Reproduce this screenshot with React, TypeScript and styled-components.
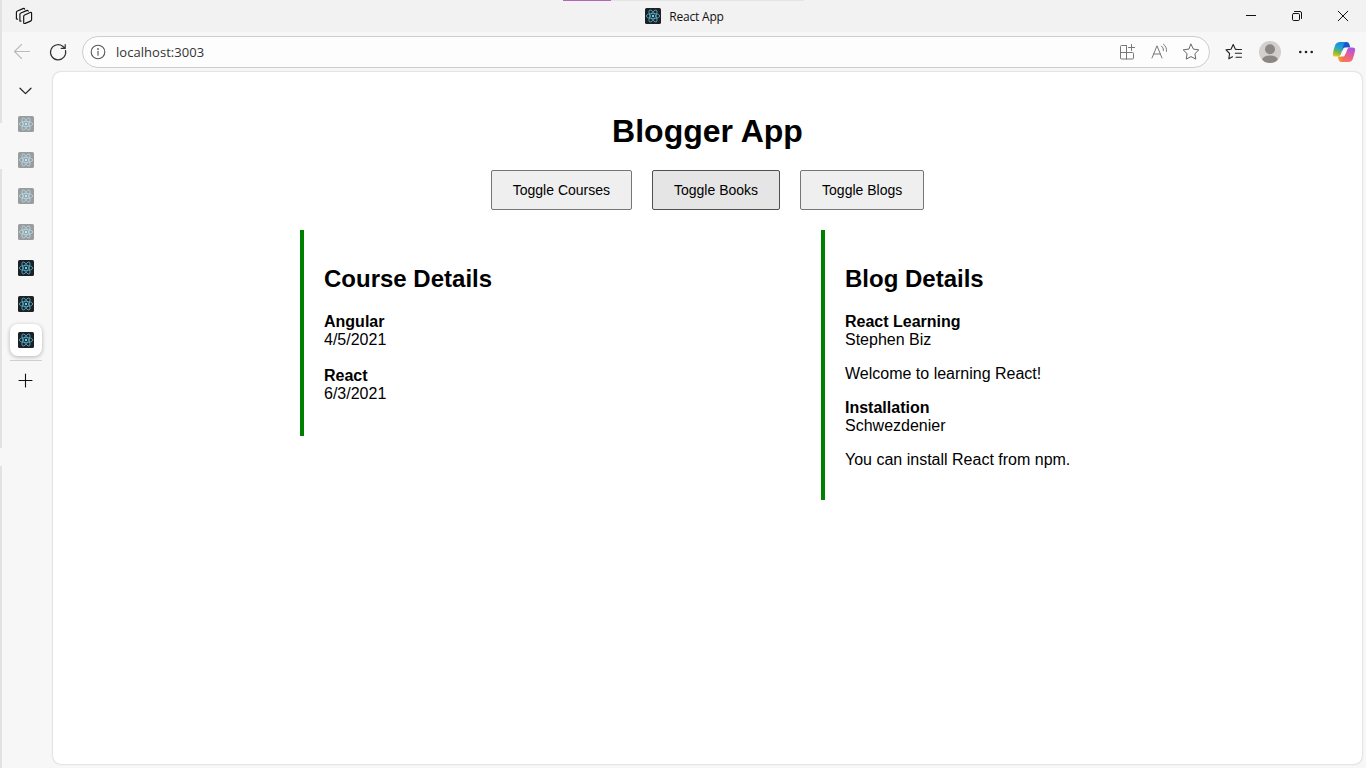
import React from 'react';
import styled, { createGlobalStyle } from 'styled-components';

const GlobalStyle = createGlobalStyle`
  * { box-sizing: border-box; }
  body { margin: 0; overflow: hidden; background: #f7f7f7; }
  svg { display: block; flex: none; }
`;

const Shell = styled.div`
  display: flex;
  height: 768px;
  background: #f7f7f7;
  font-family: "Open Sans", "Noto Sans", sans-serif;
`;

const EdgeStrip = styled.div`
  width: 2px;
  flex: none;
  background: linear-gradient(
    #e2e2e2 123px, #f7f7f7 123px, #f7f7f7 169px, #e2e2e2 169px,
    #e2e2e2 448px, #f7f7f7 448px, #f7f7f7 466px, #e2e2e2 466px
  );
`;

const Window = styled.div`
  flex: 1;
  min-width: 0;
  display: flex;
  flex-direction: column;
`;

const TitleBar = styled.header`
  position: relative;
  height: 32px;
  flex: none;
  display: grid;
  grid-template-columns: 1fr auto 1fr;
  align-items: center;
  background: #f2f2f2;
  padding: 0 13px 0 12px;
`;

const LoadingBar = styled.div`
  position: absolute;
  top: 0;
  left: 561px;
  width: 241px;
  height: 1px;
  background: linear-gradient(90deg, #b565b8 48px, #e4e4e4 48px);
`;

const TabTitle = styled.div`
  display: flex;
  align-items: center;
  gap: 8px;
  margin-left: 2px;
  font-size: 12px;
  letter-spacing: -0.2px;
  color: #111;
  white-space: nowrap;
`;

const TabLabel = styled.span`
  padding-top: 2px;
  line-height: 16px;
`;

const WindowControls = styled.div`
  display: flex;
  justify-content: flex-end;
  gap: 26px;
`;

const Toolbar = styled.div`
  height: 39px;
  flex: none;
  display: flex;
  align-items: center;
  padding: 1px 9px 0 10px;
`;

const NavButtons = styled.div`
  display: flex;
  gap: 16px;
  width: 70px;
`;

const AddressBar = styled.div`
  width: 1128px;
  height: 32px;
  display: flex;
  align-items: center;
  border: 1px solid #cccdce;
  border-radius: 16px;
  background: #fdfdfd;
  padding: 0 8px 0 5px;
`;

const Address = styled.span`
  flex: 1;
  margin-left: 8px;
  font-size: 13px;
  line-height: 18px;
  letter-spacing: 0.04px;
  color: #333;
`;

const AddressActions = styled.div`
  display: flex;
  gap: 12px;
`;

const ToolbarActions = styled.div`
  display: flex;
  align-items: center;
  margin-left: 14px;
  gap: 15px;
  svg:last-child { margin-left: 1px; }
`;

const Body = styled.div`
  flex: 1;
  min-height: 0;
  display: flex;
`;

const TabRail = styled.nav`
  width: 51px;
  flex: none;
  display: flex;
  flex-direction: column;
  align-items: center;
  padding: 10px 3px 0 0;
`;

const TabList = styled.div`
  display: flex;
  flex-direction: column;
  gap: 4px;
  margin-top: 7px;
`;

const TabButton = styled.div<{ $active?: boolean; $asleep?: boolean }>`
  width: 32px;
  height: 32px;
  display: grid;
  place-items: center;
  border-radius: 8px;
  background: ${p => (p.$active ? '#fff' : 'transparent')};
  box-shadow: ${p => (p.$active ? '0 1px 4px rgba(0,0,0,.28)' : 'none')};
  svg { opacity: ${p => (p.$asleep ? 0.42 : 1)}; }
`;

const RailDivider = styled.div`
  width: 32px;
  height: 1px;
  margin: 4px 0 10px;
  background: #cfcfcf;
`;

const Page = styled.main`
  flex: 1;
  margin: 1px 4px 4px 0;
  border-radius: 8px;
  background: #fff;
  box-shadow: 0 0 2px rgba(0,0,0,.28);
  font-family: "Liberation Sans", Arial, sans-serif;
  color: #000;
  padding-top: 41px;
`;

const PageTitle = styled.h1`
  margin: 0;
  font-size: 32px;
  line-height: 37px;
  text-align: center;
`;

const ButtonRow = styled.div`
  display: flex;
  justify-content: center;
  gap: 20px;
  margin-top: 20px;
`;

const ToggleButton = styled.button<{ $hover?: boolean }>`
  height: 40px;
  padding: 0 21px;
  border: 1px solid ${p => (p.$hover ? '#4f4f4f' : '#767676')};
  border-radius: 2px;
  background: ${p => (p.$hover ? '#e5e5e5' : '#efefef')};
  font: 14px/16px "Liberation Sans", Arial, sans-serif;
  color: #000;
`;

const Columns = styled.div`
  display: flex;
  align-items: flex-start;
  margin: 20px 0 0 247px;
`;

const Column = styled.section`
  width: 521px;
  border-left: 4px solid green;
  padding: 35px 20px 15px;
  font-size: 16px;
  line-height: 18px;
`;

const ColumnTitle = styled.h2`
  margin: 0 0 21px;
  font-size: 24px;
  line-height: 27px;
`;

const Course = styled.div`
  margin-bottom: 18px;
`;

const Blog = styled.div`
  margin-bottom: 16px;
`;

const EntryName = styled.div`
  font-weight: bold;
`;

const BlogText = styled.p`
  margin: 16px 0 0;
`;

const ReactTile = () => (
  <svg width="16" height="16" viewBox="0 0 16 16">
    <rect width="16" height="16" rx="1.6" fill="#1d2126" />
    <g fill="none" stroke="#58b0c9" strokeWidth=".8">
      <ellipse cx="8" cy="8" rx="6.7" ry="2.6" />
      <ellipse cx="8" cy="8" rx="6.7" ry="2.6" transform="rotate(60 8 8)" />
      <ellipse cx="8" cy="8" rx="6.7" ry="2.6" transform="rotate(120 8 8)" />
    </g>
    <circle cx="8" cy="8" r="1.2" fill="#61dafb" />
  </svg>
);

type IconProps = { size?: number; color?: string; width?: number; children: React.ReactNode };
const Icon = ({ size = 20, color = '#333', width = 1.1, children }: IconProps) => (
  <svg width={size} height={size} viewBox={`0 0 ${size} ${size}`} fill="none" stroke={color}
    strokeWidth={width} strokeLinecap="round" strokeLinejoin="round">{children}</svg>
);

const WorkspacesIcon = () => (
  <Icon color="#111" width={1.15}>
    <path d="M10.6 9 16.2 6.5q1.4-.5 1.4.9v6.2q0 1.1-1 1.5l-5.4 2.3q-1.5.5-1.5-1v-5.9q0-1.1.9-1.5z" />
    <path d="M7.2 15 5.9 15.2V8.5q0-1.1 1-1.5l5.6-2.4q1.3-.5 1.7.5" />
    <path d="M3.7 13.2 2.4 12.9V6.5q0-1.1 1-1.5L9 2.6q1.3-.5 1.7.5" />
  </Icon>
);

const Profile = () => (
  <svg width="22" height="22" viewBox="0 0 22 22">
    <defs><clipPath id="avatar"><circle cx="11" cy="11" r="11" /></clipPath></defs>
    <g clipPath="url(#avatar)">
      <rect width="22" height="22" fill="#d2cfcc" />
      <circle cx="11" cy="8.2" r="5" fill="#8a8785" />
      <ellipse cx="11" cy="19.4" rx="8" ry="5" fill="#8a8785" />
    </g>
  </svg>
);

const Copilot = () => (
  <svg width="24" height="24" viewBox="0 0 24 24">
    <defs>
      <linearGradient id="cpLeft" x1=".6" y1="0" x2=".3" y2="1">
        <stop offset="0" stopColor="#1a86e0" /><stop offset=".4" stopColor="#20a5d0" />
        <stop offset=".7" stopColor="#70b84c" /><stop offset="1" stopColor="#f1c516" />
      </linearGradient>
      <linearGradient id="cpRight" x1=".6" y1="0" x2=".3" y2="1">
        <stop offset="0" stopColor="#a855e5" /><stop offset=".5" stopColor="#e55c9c" />
        <stop offset="1" stopColor="#f77a50" />
      </linearGradient>
      <linearGradient id="cpBottom"><stop stopColor="#f2a52f" /><stop offset="1" stopColor="#ef5368" /></linearGradient>
    </defs>
    <path d="M10 2h4.6q2 0 2.6 1.8L18.3 7.4h-2.6q-2 0-2.7 2L12 12 9 9z" fill="#1f55cc" />
    <path d="M14 22H9.4q-2 0-2.6-1.8L5.7 16.6h2.6q2 0 2.7-2L12 12l3 3z" fill="url(#cpBottom)" />
    <path d="M7.8 2H14q-1.6.5-2.2 2.5L9.2 13.6q-.9 3-3.7 3H3.6Q.3 16.6.9 13.4q.8-4.3 2.5-8.8Q4.6 2 7.8 2z" fill="url(#cpLeft)" />
    <path d="M16.2 22H10q1.6-.5 2.2-2.5l2.6-9.1q.9-3 3.7-3h1.9q3.3 0 2.7 3.2-.8 4.3-2.5 8.8-1.2 2.6-4.4 2.6z" fill="url(#cpRight)" />
    <path d="M11 9q.5-1.6 2-1.6h3q-1 .5-1.4 2l-1.6 5.6q-.5 1.6-2 1.6H8q1-.5 1.4-2z" fill="#f7f7f7" />
  </svg>
);

const STAR = 'M10 2.2 12.4 7.1 17.8 7.9 13.9 11.7 14.8 17.1 10 14.6 5.2 17.1 6.1 11.7 2.2 7.9 7.6 7.1z';

const tabs = [
  { asleep: true }, { asleep: true }, { asleep: true }, { asleep: true },
  {}, {}, { active: true },
] as { asleep?: boolean; active?: boolean }[];

const courses = [
  { name: 'Angular', date: '4/5/2021' },
  { name: 'React', date: '6/3/2021' },
];

const blogs = [
  { title: 'React Learning', author: 'Stephen Biz', text: 'Welcome to learning React!' },
  { title: 'Installation', author: 'Schwezdenier', text: 'You can install React from npm.' },
];

export default function App() {
  return (
    <>
      <GlobalStyle />
      <Shell>
        <EdgeStrip />
        <Window>
          <TitleBar>
            <LoadingBar />
            <WorkspacesIcon />
            <TabTitle><ReactTile /><TabLabel>React App</TabLabel></TabTitle>
            <WindowControls>
              <Icon color="#111" width={1}><path d="M5 9.5h10" strokeLinecap="butt" /></Icon>
              <Icon color="#111" width={1}>
                <rect x="5.5" y="7.5" width="7" height="7" rx="1.2" />
                <path d="M7.5 5.5H13q1.5 0 1.5 1.5v5.5" />
              </Icon>
              <Icon color="#111" width={1}><path d="M5.2 5.2l9.6 9.6M14.8 5.2l-9.6 9.6" /></Icon>
            </WindowControls>
          </TitleBar>

          <Toolbar>
            <NavButtons>
              <Icon color="#bbb"><path d="M17.5 9.5H2.5M9.5 2.5l-7 7 7 7" /></Icon>
              <Icon color="#333" width={1.2}>
                <path d="M17.5 8.5A7.6 7.6 0 1 1 14.7 4.2L17 6.2M17.2 2.6v3.8h-4" />
              </Icon>
            </NavButtons>
            <AddressBar>
              <Icon color="#555" width={1.1}>
                <circle cx="10" cy="10" r="6.8" />
                <path d="M10 9.4v3.8" /><circle cx="10" cy="7" r=".35" />
              </Icon>
              <Address>localhost:3003</Address>
              <AddressActions>
                <Icon color="#777" width={1}>
                  <path d="M9.5 3.5h-5q-1 0-1 1v11.5q0 1 1 1h11q1 0 1-1v-4.5q0-1-1-1H3.5M9.5 3.5V17M14.5 2.5v6M11.5 5.5h6" />
                </Icon>
                <Icon color="#777" width={1}>
                  <path d="M3 16 8 3.8 13 16M4.7 12h6.6M12.5 4q2.2 1.5 2 4.5M14.5 2.3q3.5 2.5 3 7" />
                </Icon>
                <Icon color="#666" width={1}><path d={STAR} /></Icon>
              </AddressActions>
            </AddressBar>
            <ToolbarActions>
              <Icon color="#222" width={1.1}>
                <path d="M12.3 7.4 11.4 7.2 9.2 2.6 7 7.2 2 7.9 5.6 11.5 4.8 16.8 8.5 14.8M12 7.5h5.5M11.3 11.3h6.2M12 15.2h5.5" />
              </Icon>
              <Profile />
              <Icon color="#222">
                <g fill="#222" stroke="none">
                  <circle cx="4.3" cy="10" r="1.3" /><circle cx="10" cy="10" r="1.3" /><circle cx="15.7" cy="10" r="1.3" />
                </g>
              </Icon>
              <Copilot />
            </ToolbarActions>
          </Toolbar>

          <Body>
            <TabRail>
              <Icon color="#222" width={1.2}><path d="M4 7.2 9.5 12.6 15 7.2" /></Icon>
              <TabList>
                {tabs.map((tab, i) => (
                  <TabButton key={i} $active={tab.active} $asleep={tab.asleep}><ReactTile /></TabButton>
                ))}
              </TabList>
              <RailDivider />
              <Icon color="#111" width={1.1}><path d="M9.5 3v13M3 9.5h13" /></Icon>
            </TabRail>

            <Page>
              <PageTitle>Blogger App</PageTitle>
              <ButtonRow>
                <ToggleButton>Toggle Courses</ToggleButton>
                <ToggleButton $hover>Toggle Books</ToggleButton>
                <ToggleButton>Toggle Blogs</ToggleButton>
              </ButtonRow>
              <Columns>
                <Column>
                  <ColumnTitle>Course Details</ColumnTitle>
                  {courses.map(c => (
                    <Course key={c.name}><EntryName>{c.name}</EntryName>{c.date}</Course>
                  ))}
                </Column>
                <Column>
                  <ColumnTitle>Blog Details</ColumnTitle>
                  {blogs.map(b => (
                    <Blog key={b.title}>
                      <EntryName>{b.title}</EntryName>{b.author}
                      <BlogText>{b.text}</BlogText>
                    </Blog>
                  ))}
                </Column>
              </Columns>
            </Page>
          </Body>
        </Window>
      </Shell>
    </>
  );
}
